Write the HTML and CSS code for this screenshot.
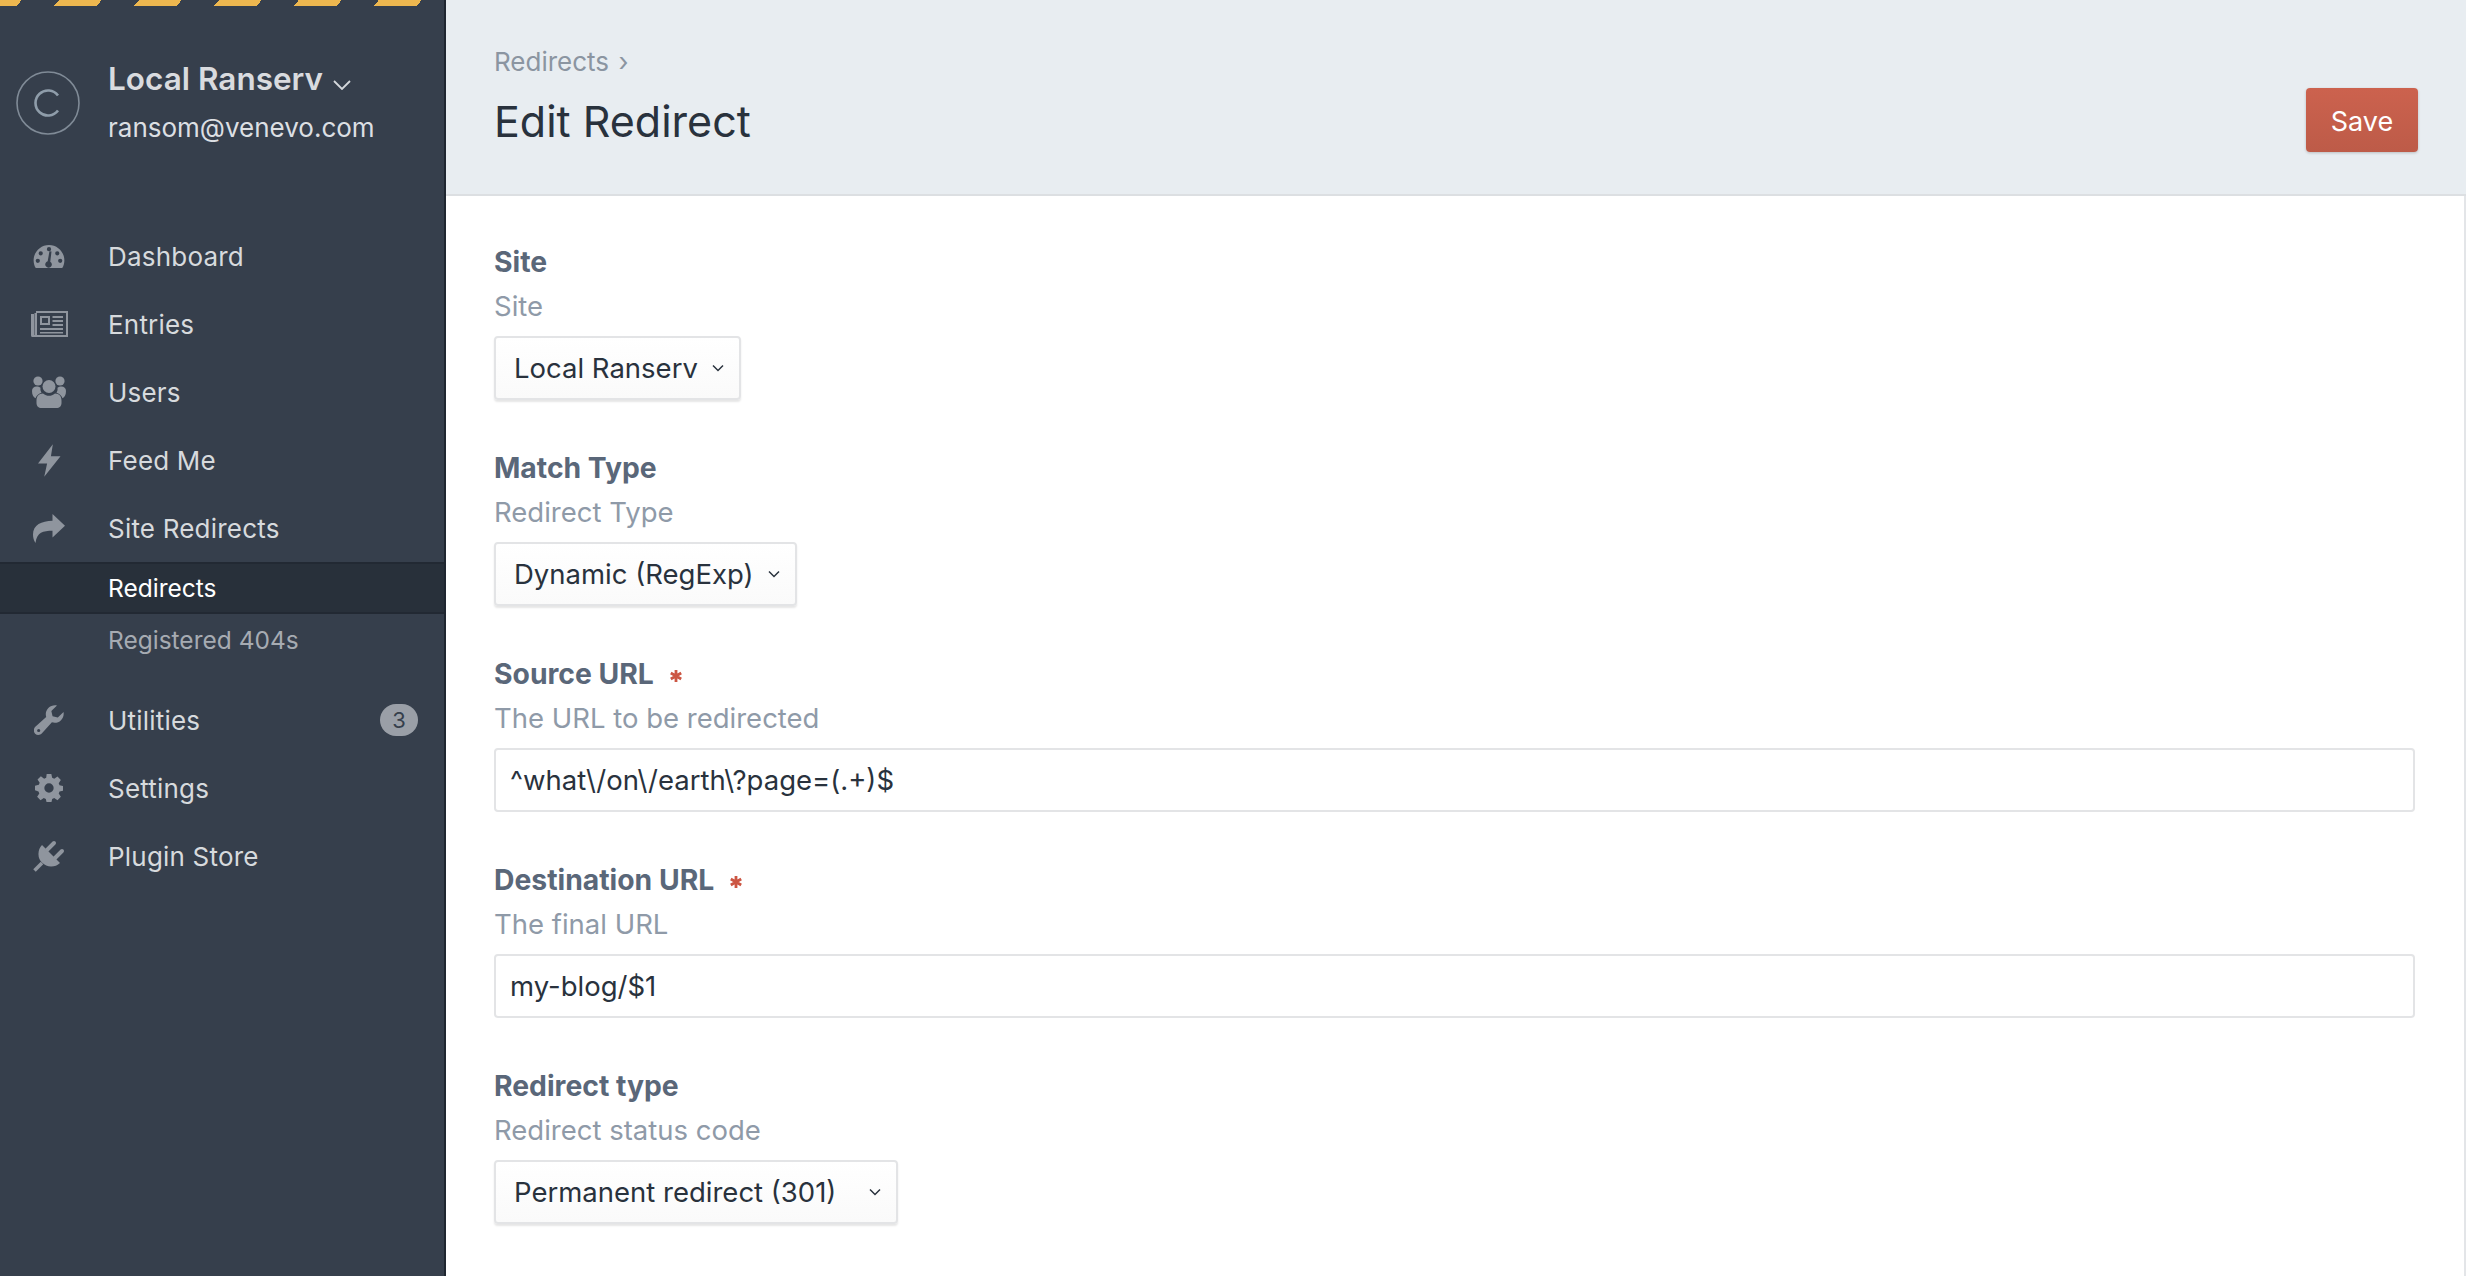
FILE: index.html
```html
<!DOCTYPE html>
<html lang="en">
<head>
  <meta charset="UTF-8">
  <title>Edit Redirect</title>
  <link rel="stylesheet" href="styles.css">
</head>
<body>
  <div class="app">
    <aside class="sidebar">
      <div class="stripes"></div>
      <div class="account">
        <div class="avatar">
          <svg viewBox="0 0 64 64" width="64" height="64"><circle cx="32" cy="32" r="31" fill="none" stroke="#808b97" stroke-width="1.6"/><path d="M42 24.500a12.500 12.500 0 1 0 0 15" fill="none" stroke="#8f9daa" stroke-width="2.600"/></svg>
        </div>
        <div class="account-text">
          <div class="site-name">Local Ranserv
            <svg class="caret" viewBox="0 0 18 10" width="18" height="10"><path d="M1 1l8 8 8-8" fill="none" stroke="#d5d8dc" stroke-width="1.800"/></svg>
          </div>
          <div class="site-mail">ransom@venevo.com</div>
        </div>
      </div>

      <nav class="nav">
        <a class="nav-item"><span class="nav-icon">
          <svg viewBox="0 0 36 28" width="32" height="25"><path fill-rule="evenodd" d="M18 1C8.400 1 .7 8.800.7 18.400c0 3.200.9 6.200 2.400 8.600h29.800c1.500-2.400 2.400-5.400 2.400-8.600C35.300 8.800 27.600 1 18 1zM18 3.400a2.400 2.400 0 1 1 0 4.800 2.400 2.400 0 0 1 0-4.800zM8.700 8a2.400 2.400 0 1 1 0 4.800 2.400 2.400 0 0 1 0-4.800zM27.300 8a2.400 2.400 0 1 1 0 4.800 2.400 2.400 0 0 1 0-4.800zM5.400 16.400a2.400 2.400 0 1 1 0 4.800 2.400 2.400 0 0 1 0-4.800zM30.600 16.400a2.400 2.400 0 1 1 0 4.800 2.400 2.400 0 0 1 0-4.800zM20.800 8.500l-1.400 11.300a3.700 3.700 0 1 1-2.900-.4l2-11.200z"/></svg>
        </span>Dashboard</a>
        <a class="nav-item"><span class="nav-icon">
          <svg viewBox="0 0 37 26" width="37" height="26"><path fill-rule="evenodd" d="M5 0h32v26H1.500A1.500 1.500 0 0 1 0 24.500V3h3v21h.5V2h1.500zM6 2v22h29V2z"/><path d="M9 5h10v9H9zM21.500 5H32v2H21.500zM21.500 9H32v2H21.500zM21.500 13H32v2H21.500zM9 17h23v2H9zM9 21h23v1.500H9z"/><path class="icon-cut" d="M11 7h6v5h-6z"/></svg>
        </span>Entries</a>
        <a class="nav-item"><span class="nav-icon">
          <svg viewBox="0 0 34 32" width="34" height="32"><circle cx="6" cy="5" r="4.600"/><circle cx="28" cy="5" r="4.600"/><circle cx="17" cy="10.500" r="6.500"/><path d="M0 15c0-3 2-4.500 4.500-4.500 1.500 0 3 .5 4 1.200-.3 2 .2 3.500 1 5-2.500.8-5 2.800-6 5.500C1.500 21.500 0 19 0 15z"/><path transform="matrix(-1 0 0 1 34 0)" d="M0 15c0-3 2-4.500 4.500-4.500 1.500 0 3 .5 4 1.200-.3 2 .2 3.500 1 5-2.500.8-5 2.800-6 5.500C1.500 21.500 0 19 0 15z"/><path d="M11 17.500c2 1.500 4 2.300 6 2.300s4-.8 6-2.300c4.500 0 6.500 3 6.500 7V27c0 3-2 5-5 5h-15c-3 0-5-2-5-5v-2.500c0-4 2-7 6.500-7z"/></svg>
        </span>Users</a>
        <a class="nav-item"><span class="nav-icon">
          <svg viewBox="0 0 24 34" width="23" height="33"><path d="M15.500 0L0 20h9.500L6.500 34 23.500 12.500H13.500z"/></svg>
        </span>Feed Me</a>
        <a class="nav-item"><span class="nav-icon">
          <svg viewBox="0 0 32 29" width="32" height="29"><path d="M19.500 0L32 11.800 19.500 23.500v-6.800C10 16.700 4 18 2.500 29 .8 26.500 0 23.500 0 20.500 0 11 8.500 7 19.500 6.800z"/></svg>
        </span>Site Redirects</a>
        <a class="sub-item active">Redirects</a>
        <a class="sub-item">Registered 404s</a>
        <a class="nav-item nav-gap"><span class="nav-icon">
          <svg viewBox="0 0 32 32" width="30" height="30"><path fill-rule="evenodd" d="M31.500 7.500c.6 3.200-.4 6.400-2.700 8.700-2.600 2.600-6.300 3.400-9.700 2.300L8.500 30.200c-2 2.200-5.300 2.300-7.300.4-2-2-1.900-5.300.2-7.300L13 12.700c-1-3.400-.3-7 2.300-9.600C17.700.8 21.200-.3 24.500.4l-6 6 1.300 5.600 5.600 1.400zM5 25.500a1.700 1.700 0 1 0 0 3.400 1.700 1.700 0 0 0 0-3.400z"/></svg>
        </span>Utilities<span class="badge">3</span></a>
        <a class="nav-item"><span class="nav-icon">
          <svg viewBox="0 0 30 30" width="28" height="28"><path fill-rule="evenodd" d="M12.500 0h5l.9 4.100 2.200.9 3.500-2.300 3.600 3.600-2.300 3.500.9 2.200 4.100.9v5l-4.100.9-.9 2.200 2.300 3.500-3.600 3.600-3.500-2.300-2.200.9-.9 4.100h-5l-.9-4.100-2.200-.9-3.500 2.300-3.600-3.600 2.300-3.500-.9-2.200L0 17.500v-5l4.100-.9.9-2.200-2.300-3.500 3.600-3.600L9.800 5l2.200-.9zM15 10a5 5 0 1 0 0 10 5 5 0 0 0 0-10z"/></svg>
        </span>Settings</a>
        <a class="nav-item"><span class="nav-icon">
          <svg viewBox="0 0 32 32" width="32" height="32"><path d="M9 5l18 18A12.730 12.730 0 0 1 9 5z"/><path class="plug-line" d="M14 10l7-7M22 18l7-7"/><path class="plug-cord" d="M9 23l-7.500 7.500"/></svg>
        </span>Plugin Store</a>
      </nav>
    </aside>

    <main class="main">
      <header class="page-head">
        <div>
          <div class="crumb">Redirects <span class="crumb-sep">›</span></div>
          <h1>Edit Redirect</h1>
        </div>
        <button class="save">Save</button>
      </header>

      <form class="form">
        <div class="field">
          <label>Site</label>
          <p class="hint">Site</p>
          <div class="select">Local Ranserv<svg viewBox="0 0 12 8" width="12" height="8"><path d="M1 1.500l5 5 5-5" fill="none" stroke="#29323d" stroke-width="1.500"/></svg></div>
        </div>
        <div class="field">
          <label>Match Type</label>
          <p class="hint">Redirect Type</p>
          <div class="select">Dynamic (RegExp)<svg viewBox="0 0 12 8" width="12" height="8"><path d="M1 1.500l5 5 5-5" fill="none" stroke="#29323d" stroke-width="1.500"/></svg></div>
        </div>
        <div class="field">
          <label>Source URL<svg class="req" viewBox="0 0 12 12" width="12" height="12"><path d="M6 0v12M.8 3l10.400 6M.8 9l10.400-6"/></svg></label>
          <p class="hint">The URL to be redirected</p>
          <div class="input">^what\/on\/earth\?page=(.+)$</div>
        </div>
        <div class="field">
          <label>Destination URL<svg class="req" viewBox="0 0 12 12" width="12" height="12"><path d="M6 0v12M.8 3l10.400 6M.8 9l10.400-6"/></svg></label>
          <p class="hint">The final URL</p>
          <div class="input">my-blog/$1</div>
        </div>
        <div class="field">
          <label>Redirect type</label>
          <p class="hint">Redirect status code</p>
          <div class="select select-wide">Permanent redirect (301)<svg viewBox="0 0 12 8" width="12" height="8"><path d="M1 1.500l5 5 5-5" fill="none" stroke="#29323d" stroke-width="1.500"/></svg></div>
        </div>
      </form>
    </main>
  </div>
</body>
</html>
```

FILE: styles.css
```css
* {
  box-sizing: border-box;
}

html, body {
  margin: 0;
  height: 100%;
  overflow: hidden;
}

body {
  font-family: Inter, "Liberation Sans", sans-serif;
  font-size: 27.5px;
  background-color: #fff;
  color: #29323d;
}

.app {
  display: flex;
  height: 1276px;
}

/* sidebar */
.sidebar {
  width: 446px;
  flex-shrink: 0;
  background-color: #363f4c;
  border-right: 2px solid #1f2630;
}

.stripes {
  height: 6px;
  background: repeating-linear-gradient(129.800deg, #edb74f 0, #edb74f 16.700px, #363f4c 16.700px, #363f4c 45.300px, #edb74f 45.300px, #edb74f 61.450px);
}

.account {
  display: flex;
  align-items: center;
  padding: 54px 0 0 16px;
}

.avatar {
  width: 64px;
  height: 64px;
  margin-right: 28px;
}

.avatar svg {
  display: block;
}

.site-name {
  font-size: 31.500px;
  font-weight: 600;
  color: #d9dbdf;
  line-height: 38px;
}

.caret {
  margin-left: 2px;
}

.site-mail {
  font-size: 26px;
  color: #dcdfe3;
  line-height: 36px;
  margin-top: 12px;
}

.nav {
  margin-top: 76px;
}

.nav-item {
  display: flex;
  align-items: center;
  height: 68px;
  padding-left: 32px;
  color: #d7dadd;
  font-size: 26px;
  letter-spacing: 0.2px;
}

.nav-gap {
  margin-top: 20px;
}

.nav-icon {
  width: 34px;
  margin-right: 42px;
  flex-shrink: 0;
  display: flex;
  align-items: center;
  justify-content: center;
}

.nav-icon svg {
  display: block;
  flex-shrink: 0;
  fill: #8f959e;
}

.nav-icon .icon-cut {
  fill: #363f4c;
}

.plug-line {
  fill: none;
  stroke: #8f959e;
  stroke-width: 4;
  stroke-linecap: round;
}

.plug-cord {
  fill: none;
  stroke: #8f959e;
  stroke-width: 3.500;
}

.sub-item {
  display: block;
  height: 52px;
  line-height: 52px;
  padding-left: 108px;
  font-size: 24.500px;
  color: #a6abb2;
}

.sub-item.active {
  color: #fff;
  line-height: 48px;
  background-color: #28303a;
  border-top: 2px solid #222933;
  border-bottom: 2px solid #222933;
}

.badge {
  margin-left: auto;
  margin-right: 26px;
  width: 38px;
  height: 32px;
  border-radius: 16px;
  background-color: #9a9fa7;
  color: #363f4c;
  font-size: 22px;
  line-height: 32px;
  letter-spacing: 0;
  text-align: center;
}

/* main column */
.main {
  flex: 1;
  min-width: 0;
  border-right: 2px solid #e3e5e8;
}

.page-head {
  height: 196px;
  background-color: #e8edf1;
  border-bottom: 2px solid #dcdfe2;
  padding: 44px 48px 0;
  display: flex;
  justify-content: space-between;
  margin-right: -2px;
}

.crumb {
  color: #8b95a1;
  font-size: 26px;
  line-height: 36px;
}

.crumb-sep {
  margin-left: 2px;
}

h1 {
  margin: 13px 0 0;
  font-size: 43px;
  font-weight: 400;
  line-height: 56px;
  color: #29323d;
}

.save {
  align-self: flex-start;
  width: 112px;
  height: 64px;
  margin-top: 44px;
  padding: 3px 0 0;
  border: none;
  border-radius: 4px;
  background: linear-gradient(#cc624e, #bd5b48);
  box-shadow: 0 1px 3px rgba(0, 0, 0, 0.2);
  color: #fff;
  font-family: inherit;
  font-size: 27px;
}

.form {
  padding: 48px 49px 0 48px;
}

.field {
  display: flex;
  flex-direction: column;
  align-items: flex-start;
  margin-bottom: 50px;
}

label {
  display: flex;
  align-items: center;
  font-size: 28.300px;
  font-weight: 700;
  color: #5a6779;
  line-height: 36px;
}

.req {
  margin-left: 16px;
  margin-top: 4px;
  fill: none;
  stroke: #cc5643;
  stroke-width: 2.800;
}

.hint {
  margin: 8px 0 12px;
  color: #8f9aa8;
  line-height: 36px;
}

.select {
  display: flex;
  align-items: center;
  height: 64px;
  padding: 0 15px 0 18px;
  border: 2px solid #e3e4e6;
  border-radius: 4px;
  background: linear-gradient(#fff, #fafafa);
  box-shadow: 0 2px 2px rgba(0, 0, 0, 0.1);
  color: #29323d;
}

.select svg {
  margin-left: 14px;
}

.select-wide svg {
  margin-left: 33px;
}

.input {
  display: flex;
  align-items: center;
  align-self: stretch;
  height: 64px;
  padding: 0 14px;
  border: 2px solid #e3e4e6;
  border-radius: 4px;
  color: #29323d;
}
```
